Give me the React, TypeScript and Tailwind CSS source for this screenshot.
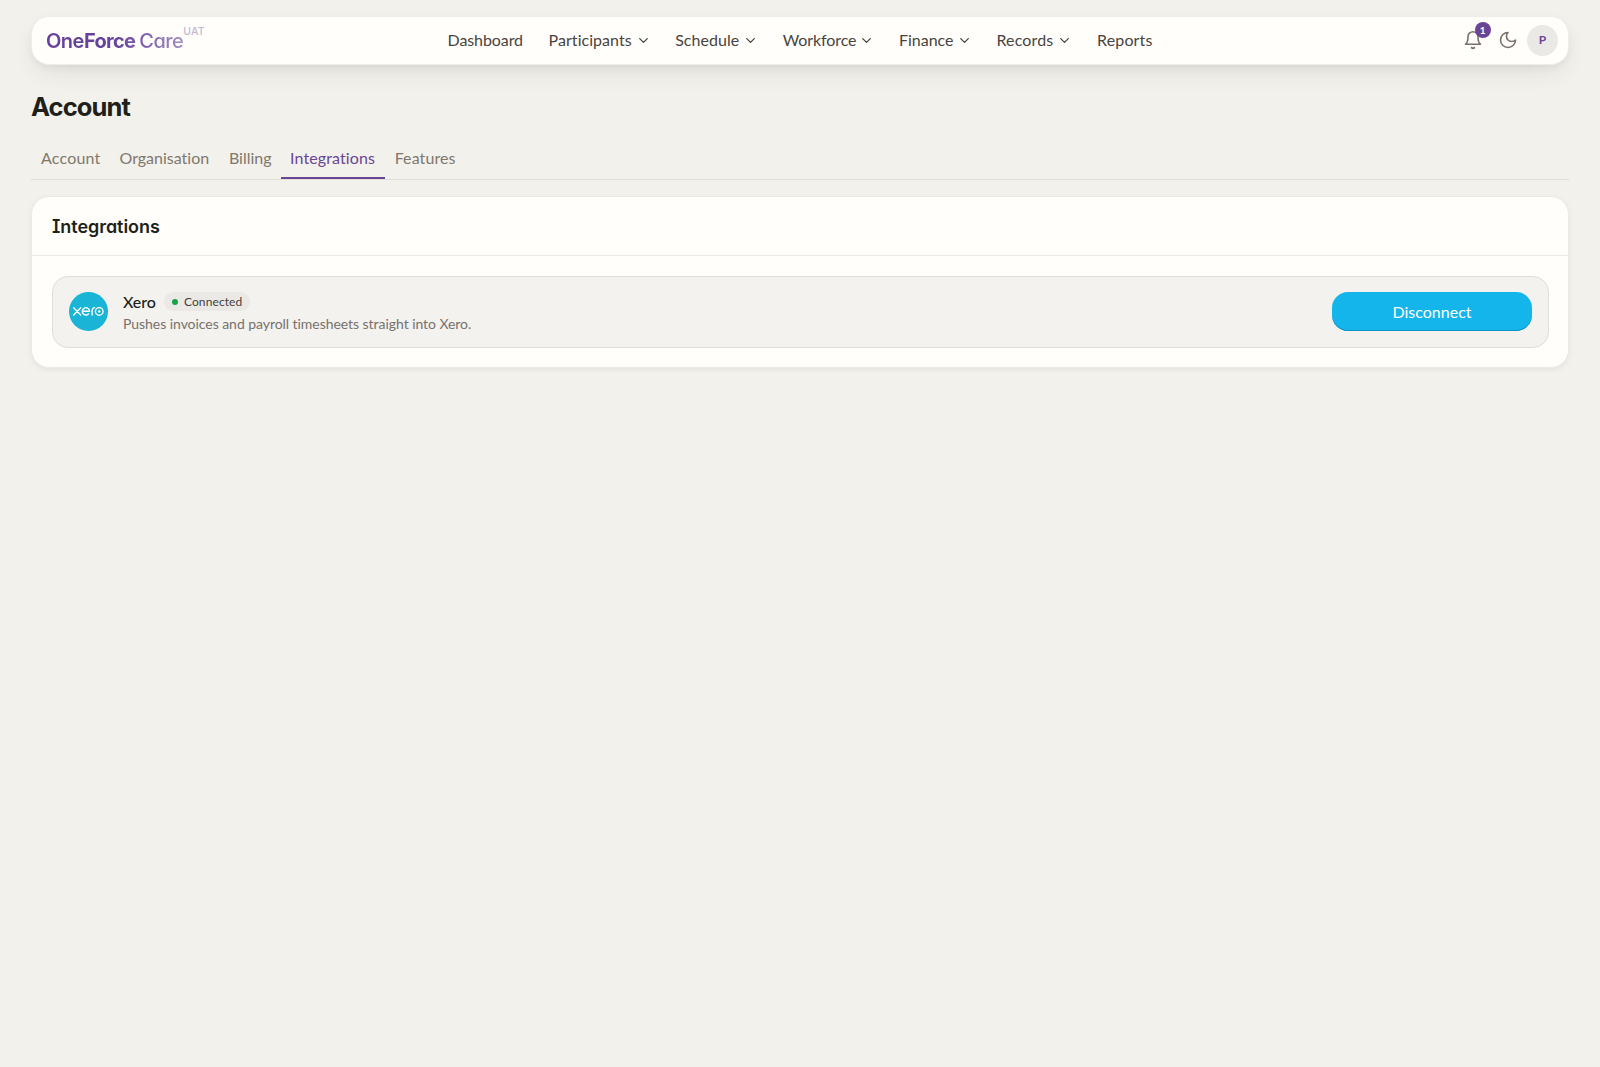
import { useState } from "react";

interface NavItem {
  label: string;
  width: string;
  menu?: boolean;
}

const NAV_ITEMS: NavItem[] = [
  { label: "Dashboard", width: "w-[75.4px] tracking-[-0.1px]" },
  { label: "Participants", width: "w-[84px] tracking-[0.05px]", menu: true },
  { label: "Schedule", width: "w-[65px] tracking-[0.05px]", menu: true },
  { label: "Workforce", width: "w-[73.6px] tracking-[-0.1px]", menu: true },
  { label: "Finance", width: "w-[54.9px]", menu: true },
  { label: "Records", width: "w-[58px] tracking-[0.15px]", menu: true },
  { label: "Reports", width: "w-[55.4px] tracking-[0.15px]" },
];

const TABS = [
  { label: "Account", width: "w-[79px] pl-[10px] tracking-[0.2px]" },
  { label: "Organisation", width: "w-[109.4px] pl-[9.5px]" },
  { label: "Billing", width: "w-[61.2px] pl-[9.5px]" },
  { label: "Integrations", width: "w-[104.6px] pl-[9.5px] tracking-[0.1px]" },
  { label: "Features", width: "w-[80.6px] pl-[9.5px] tracking-[0.1px]" },
];

const DISPLAY =
  "font-['Inter',sans-serif] [font-feature-settings:'cv08','cv11']";

function Chevron() {
  return (
    <svg
      viewBox="0 0 24 24"
      className="size-[13px] shrink-0"
      fill="none"
      stroke="currentColor"
      strokeWidth="2.4"
      strokeLinecap="round"
      strokeLinejoin="round"
    >
      <path d="m19 8.5-7 7-7-7" />
    </svg>
  );
}

function HeaderIcon({ paths }: { paths: string[] }) {
  return (
    <svg
      viewBox="0 0 24 24"
      className="size-5"
      fill="none"
      stroke="currentColor"
      strokeWidth="1.9"
      strokeLinecap="round"
      strokeLinejoin="round"
    >
      {paths.map((d) => (
        <path key={d} d={d} />
      ))}
    </svg>
  );
}

function XeroLogo() {
  return (
    <svg
      viewBox="0 0 40 40"
      className="size-[39px] shrink-0"
      fill="none"
      stroke="#fff"
      strokeWidth="1.4"
      strokeLinecap="round"
    >
      <circle cx="20" cy="20" r="20" fill="#1ab4d7" stroke="none" />
      <path d="m4.8 16.2 7.2 7.4M12 16.2l-7.2 7.4" />
      <path d="M13.7 19.8h7.4a3.75 3.75 0 1 0-1.1 2.7" />
      <path d="M23.7 23.7v-4.2c0-2 1-3.2 2.5-3.4" />
      <circle cx="31" cy="19.9" r="3.9" />
      <circle cx="31" cy="19.9" r="1.2" fill="#fff" stroke="none" />
    </svg>
  );
}

function Brand() {
  return (
    <a href="#" className={`flex items-start pl-1 ${DISPLAY}`}>
      <span className="mt-px bg-linear-to-r from-[#67429a] from-50% to-[#a08bc0] bg-clip-text text-[20px] leading-6 text-transparent">
        <span className="font-semibold tracking-[-0.5px]">One</span>
        <span className="font-bold tracking-[-0.7px]">Force</span>
        <span className="ml-1 font-medium tracking-[-0.5px]">Care</span>
      </span>
      <span className="-mt-[2px] text-[10.5px] leading-3 font-medium tracking-[0.1px] text-[#c3b9d1]">
        UAT
      </span>
    </a>
  );
}

function Header() {
  return (
    <header className="grid h-[48.5px] grid-cols-[1fr_auto_1fr] items-center rounded-[18px] border border-[#eeede9] bg-[#fffefb] px-[10px] shadow-[0_10px_24px_-6px_rgba(60,55,40,0.12),0_3px_8px_-3px_rgba(60,55,40,0.1)]">
      <Brand />
      <nav className="flex items-center gap-[25.6px] text-[#48443d]">
        {NAV_ITEMS.map((item) => (
          <button key={item.label} type="button" className="flex items-center gap-1">
            <span className={`text-left whitespace-nowrap ${item.width}`}>{item.label}</span>
            {item.menu && <Chevron />}
          </button>
        ))}
      </nav>
      <div className="flex items-center justify-end text-[#78716c]">
        <button type="button" className="relative mr-[14.5px]">
          <HeaderIcon
            paths={[
              "M6 8a6 6 0 0 1 12 0c0 7 3 9 3 9H3s3-2 3-9",
              "M10.3 21a1.94 1.94 0 0 0 3.4 0",
            ]}
          />
          <span className="absolute -top-2 left-3 flex size-[15.5px] items-center justify-center rounded-full bg-[#6b4595] text-[10px] font-bold text-white">
            1
          </span>
        </button>
        <button type="button" className="mr-[9.5px]">
          <HeaderIcon paths={["M12 3a6 6 0 0 0 9 9 9 9 0 1 1-9-9Z"]} />
        </button>
        <span className="flex size-[31px] items-center justify-center rounded-full bg-[#ebe9e6] text-[12px] font-bold text-[#6b4595]">
          P
        </span>
      </div>
    </header>
  );
}

export default function App() {
  const [active, setActive] = useState("Integrations");

  return (
    <div className="min-h-screen bg-[#f2f1ec] px-[31px] pt-4 font-['Lato',sans-serif] text-[16px] leading-6 text-[#211f1a] [font-variant-ligatures:none]">
      <Header />

      <h1 className={`mt-[24.5px] text-[25.5px] leading-9 font-bold tracking-[-0.9px] ${DISPLAY}`}>
        Account
      </h1>

      <div className="mt-[14px] flex border-b border-[#dfded9]">
        {TABS.map((tab) => (
          <button
            key={tab.label}
            type="button"
            onClick={() => setActive(tab.label)}
            className={`h-[40px] border-b-2 pb-px text-left whitespace-nowrap ${tab.width} ${
              active === tab.label
                ? "border-[#6b4595] text-[#6b4595]"
                : "border-transparent text-[#7f786d]"
            }`}
          >
            {tab.label}
          </button>
        ))}
      </div>

      <section className="mt-4 rounded-[18px] border border-[#ebeae6] bg-[#fffefb] shadow-[0_2px_5px_rgba(60,55,40,0.07)]">
        <div className="flex h-[59px] items-center border-b border-[#ebeae7] px-5">
          <h2 className={`pt-px text-[18px] font-semibold tracking-[-0.05px] ${DISPLAY}`}>
            Integrations
          </h2>
        </div>
        <div className="pt-5 pr-[19px] pb-[19px] pl-5">
          <div className="flex h-[72px] items-center rounded-2xl border border-[#dfdedb] bg-[#f3f2ef] px-4 pb-px">
            <XeroLogo />
            <div className="ml-[15px] flex-1">
              <div className="flex items-center gap-2">
                <span className="font-medium">Xero</span>
                <span className="flex h-[19px] items-center gap-1.5 rounded-full bg-[#ebe9e5] px-2 text-[12px] tracking-[0.1px] text-[#44403c]">
                  <span className="size-1.5 rounded-full bg-[#16a34a]" />
                  Connected
                </span>
              </div>
              <p className="text-[14px] leading-5 tracking-[-0.05px] text-[#78716c]">
                Pushes invoices and payroll timesheets straight into Xero.
              </p>
            </div>
            <button
              type="button"
              className="h-[39px] w-[200px] rounded-2xl bg-[#13b5ea] text-white shadow-[inset_0_-1px_0_#0f93c4]"
            >
              Disconnect
            </button>
          </div>
        </div>
      </section>
    </div>
  );
}
